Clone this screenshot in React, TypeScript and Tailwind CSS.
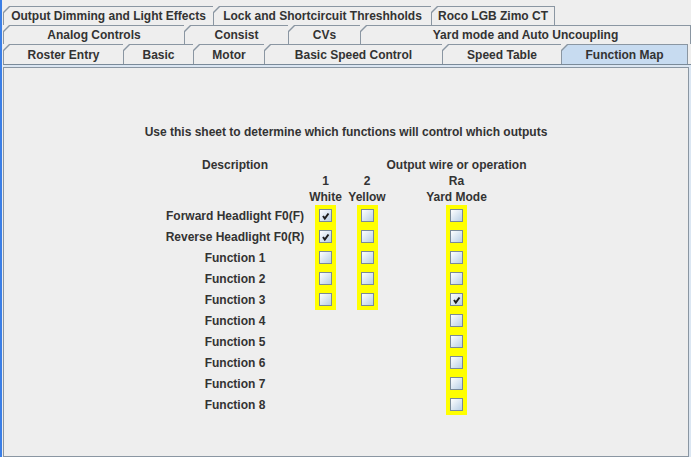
import React from 'react';

type TabDef = { label: string; w: number; selected?: boolean; last?: boolean };

const rows: TabDef[][] = [
  [
    { label: 'Output Dimming and Light Effects', w: 210 },
    { label: 'Lock and Shortcircuit Threshholds', w: 218 },
    { label: 'Roco LGB Zimo CT', w: 124, last: true },
  ],
  [
    { label: 'Analog Controls', w: 181 },
    { label: 'Consist', w: 104 },
    { label: 'CVs', w: 72 },
    { label: 'Yard mode and Auto Uncoupling', w: 331, last: true },
  ],
  [
    { label: 'Roster Entry', w: 120 },
    { label: 'Basic', w: 70 },
    { label: 'Motor', w: 71 },
    { label: 'Basic Speed Control', w: 178 },
    { label: 'Speed Table', w: 119 },
    { label: 'Function Map', w: 127, selected: true, last: true },
  ],
];

function Tab({ tab }: { tab: TabDef }) {
  return (
    <div
      className={`h-full shrink-0 bg-[#8a96a2] pt-[1px] pl-[1px] [clip-path:polygon(6px_0,100%_0,100%_100%,0_100%,0_6px)] ${tab.last ? 'pr-[1px]' : ''}`}
      style={{ width: tab.w }}
    >
      <div
        className={`flex h-full items-center justify-center [clip-path:polygon(6px_0,100%_0,100%_100%,0_100%,0_6px)] ${
          tab.selected ? 'bg-[#c7dbf0]' : 'bg-[#eeeeee]'
        }`}
      >
        {tab.label}
      </div>
    </div>
  );
}

function CheckBox({ checked }: { checked?: boolean }) {
  return (
    <div className="flex h-[21px] w-[21px] items-center justify-center bg-[#ffff00]">
      <div className="relative h-[13px] w-[13px] border border-[#7a8a99] bg-linear-to-br from-[#ffffff] to-[#b8cfe5]">
        {checked && (
          <svg className="absolute left-0 top-0" width="11" height="11" viewBox="0 0 11 11">
            <path d="M3 6 L4.8 8.5 L8.5 3.5" fill="none" stroke="#1e1e1e" strokeWidth="2" />
          </svg>
        )}
      </div>
    </div>
  );
}

const functions: { name: string; c1?: boolean; c2?: boolean; c3?: boolean; hasOutputs: boolean }[] = [
  { name: 'Forward Headlight F0(F)', c1: true, hasOutputs: true },
  { name: 'Reverse Headlight F0(R)', c1: true, hasOutputs: true },
  { name: 'Function 1', hasOutputs: true },
  { name: 'Function 2', hasOutputs: true },
  { name: 'Function 3', c3: true, hasOutputs: true },
  { name: 'Function 4', hasOutputs: false },
  { name: 'Function 5', hasOutputs: false },
  { name: 'Function 6', hasOutputs: false },
  { name: 'Function 7', hasOutputs: false },
  { name: 'Function 8', hasOutputs: false },
];

function Row({ label, a, b, c }: { label?: React.ReactNode; a?: React.ReactNode; b?: React.ReactNode; c?: React.ReactNode }) {
  return (
    <div className="flex">
      <div className="flex w-[142px] justify-center whitespace-nowrap">{label}</div>
      <div className="flex w-[39px] justify-center whitespace-nowrap">{a}</div>
      <div className="flex w-[44px] justify-center whitespace-nowrap">{b}</div>
      <div className="w-[35px]" />
      <div className="flex w-[65px] justify-center whitespace-nowrap">{c}</div>
    </div>
  );
}

export default function App() {
  return (
    <div className="flex h-[457px] w-[691px] overflow-hidden bg-[#eeeeee] font-['Liberation_Sans',Arial,sans-serif] text-[12px] font-bold text-[#333333]">
      <div className="w-[2px] shrink-0 bg-[#3a7ee6]" />
      <div className="flex flex-1 flex-col pl-[1px] pt-[6px]">
        {rows.map((row, i) => (
          <div key={i} className={`flex ${i === 2 ? 'h-[20px]' : 'h-[19px]'}`}>
            {row.map((t) => (
              <Tab key={t.label} tab={t} />
            ))}
          </div>
        ))}
        <div className="flex flex-1 flex-col border-t border-[#7a8a99] bg-[#dbe6f2] pt-[2px] pr-[2px]">
          <div className="flex-1 border border-[#8a96a2] bg-[#eeeeee] pt-[56px] leading-[16px]">
            <div className="text-center">Use this sheet to determine which functions will control which outputs</div>
            <div className="ml-[160px] mt-[17px] flex flex-col">
              <Row label="Description" c="Output wire or operation" />
              <Row a="1" b="2" c="Ra" />
              <Row a="White" b="Yellow" c="Yard Mode" />
              {functions.map((f) => (
                <div key={f.name} className="flex h-[21px] items-center">
                  <div className="flex w-[142px] justify-center whitespace-nowrap">{f.name}</div>
                  <div className="flex w-[39px] justify-center">{f.hasOutputs && <CheckBox checked={f.c1} />}</div>
                  <div className="flex w-[44px] justify-center">{f.hasOutputs && <CheckBox checked={f.c2} />}</div>
                  <div className="w-[35px]" />
                  <div className="flex w-[65px] justify-center">
                    <CheckBox checked={f.c3} />
                  </div>
                </div>
              ))}
            </div>
          </div>
        </div>
      </div>
    </div>
  );
}
